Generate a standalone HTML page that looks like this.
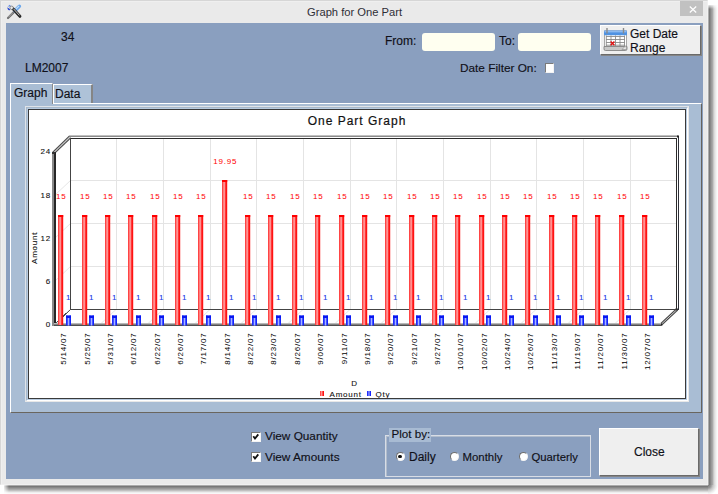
<!DOCTYPE html>
<html><head><meta charset="utf-8">
<style>
*{box-sizing:border-box}
html,body{margin:0;padding:0}
body{width:718px;height:494px;background:#fff;position:relative;overflow:hidden;font-family:"Liberation Sans",sans-serif;color:#1a1a1a}
.a{position:absolute}
.t{position:absolute;white-space:pre;font-size:12px;line-height:14px;color:#101018;-webkit-text-stroke:0.15px #101018}
#win{left:0;top:0;width:708px;height:485px;background:#eaeaea;border:1px solid #d6d6d6;border-right-color:#f0f0f0;border-bottom-color:#f0f0f0;box-shadow:inset 1px 1px 0 #efefef}
#client{left:6px;top:23px;width:697px;height:456px;background:#8a9fbf}
.inp{background:#fffff0;border-radius:3px}
.btn{background:#efefef;border:1px solid;border-color:#fff #6a6a6a #6a6a6a #fff;box-shadow:1px 1px 0 #858585}
.cb{background:#fff;border:1px solid;border-color:#7a7a7a #f4f4f4 #f4f4f4 #7a7a7a}
.rb{background:#fff;border-radius:50%;border:1.3px solid;border-color:#6e6e6e #f4f4f4 #f4f4f4 #6e6e6e}
</style></head>
<body>
<div class="a" style="left:708px;top:5px;width:10px;height:480px;background:linear-gradient(to right,#c6c6c6 0px,#7a7a7a 1.5px,#888 2.5px,#9a9a9a 3.5px,#a8a8a8 4.5px,#c6c6c6 5.5px,#dcdcdc 6.5px,#e9e9e9 7.5px,#f3f3f3 8.5px,#fafafa 9.5px)"></div>
<div class="a" style="left:708px;top:0px;width:10px;height:9px;background:linear-gradient(to bottom,#fff 4px,rgba(255,255,255,0) 9px)"></div>
<div class="a" style="left:4px;top:485px;width:704px;height:9px;background:linear-gradient(to bottom,#c4c4c4 0px,#777 1.5px,#888 2.5px,#999 3.5px,#aaa 4.5px,#c0c0c0 5.5px,#d8d8d8 6.5px,#eee 7.5px,#f8f8f8 8.5px)"></div>
<div class="a" style="left:0px;top:485px;width:9px;height:9px;background:linear-gradient(to right,#fff 3px,rgba(255,255,255,0) 9px)"></div>
<div class="a" style="left:708px;top:485px;width:10px;height:9px;background:radial-gradient(circle at 0 0,#7a7a7a 0px,#999 3px,#c6c6c6 5px,#eee 8px,#fff 10px)"></div>
<div id="win" class="a"></div>

<!-- title bar icon -->
<svg class="a" style="left:4px;top:2px" width="20" height="20" viewBox="0 0 20 20">
  <path d="M4 16 L9.6 10.4" stroke="#6e6e6e" stroke-width="2.2" stroke-linecap="round"/>
  <path d="M4.4 15.2 L9.2 10.4" stroke="#c4c4c4" stroke-width="0.7"/>
  <path d="M10.8 8.8 L15.4 4.3" stroke="#6aa6ea" stroke-width="3.4" stroke-linecap="round"/>
  <path d="M10.6 8.4 L15 4" stroke="#c4e0fa" stroke-width="1.2"/>
  <path d="M9 6.8 L15.9 14.3" stroke="#262626" stroke-width="3" stroke-linecap="round"/>
  <path d="M9.6 6.9 L15.5 13.4" stroke="#d8d8d8" stroke-width="0.9"/>
  <path d="M3.6 4.4 L5.8 2.8 L7.2 4.4 Z" fill="#5a86e8"/>
  <path d="M3.4 5.2 L6.2 7.6 L5.2 8.6 Q3.2 7.4 3.4 5.2Z" fill="#1638d0"/>
  <circle cx="7.6" cy="5.8" r="1.7" fill="#e8e8e8" stroke="#555" stroke-width="0.6"/>
</svg>
<div class="t" style="left:307px;top:4.5px;font-size:11.2px;color:#2e2e36;-webkit-text-stroke:0">Graph for One Part</div>
<div class="a" style="left:680px;top:1px;width:23px;height:15px;background:#c1c1c1"></div>
<svg class="a" style="left:688.5px;top:5.5px" width="8" height="7" viewBox="0 0 8 7"><path d="M0.8 0.5 L7.2 6.5 M7.2 0.5 L0.8 6.5" stroke="#fff" stroke-width="1.2"/></svg>

<div id="client" class="a"></div>

<div class="t" style="left:61px;top:30px">34</div>
<div class="t" style="left:25px;top:61px">LM2007</div>

<div class="t" style="left:385px;top:34px">From:</div>
<div class="a inp" style="left:422px;top:33px;width:73px;height:18px"></div>
<div class="t" style="left:499px;top:34px">To:</div>
<div class="a inp" style="left:518px;top:33px;width:73px;height:18px"></div>

<div class="a btn" style="left:600px;top:25px;width:101px;height:30px"></div>
<div class="t" style="left:630px;top:27px;line-height:14px">Get Date<br>Range</div>
<svg class="a" style="left:603px;top:27px" width="25" height="25" viewBox="0 0 25 25">
  <rect x="1.5" y="4" width="22" height="16" fill="#fff" stroke="#a8a8a8" stroke-width="1"/>
  <path d="M1 19.5 H24 V22 Q24 23.5 22.5 23.5 H2.5 Q1 23.5 1 22Z" fill="#c8c8c8" stroke="#7a7a7a" stroke-width="0.8"/>
  <rect x="1" y="3.6" width="23" height="4.6" rx="1" fill="#4f92e2"/>
  <rect x="1.5" y="3.8" width="22" height="1.6" fill="#8cbaf0"/>
  <path d="M3 9.5 H22 M3 12.5 H22 M3 15.5 H22 M3 18.2 H22" stroke="#8a8a8a" stroke-width="0.9"/>
  <path d="M3.3 8.5 V19 M8 8.5 V19 M12.5 8.5 V19 M17 8.5 V19 M21.5 8.5 V19" stroke="#8a8a8a" stroke-width="0.9"/>
  <path d="M4 1 V6.5 M20.5 1 V6.5" stroke="#8a8a8a" stroke-width="1.4"/>
  <path d="M7.6 14.6 L11.4 18.2 M11.4 14.6 L7.6 18.2" stroke="#e01010" stroke-width="1.4"/>
  <path d="M19 22.5 L23 18.5 L23.5 22.5Z" fill="#e8e8e8" stroke="#888" stroke-width="0.6"/>
</svg>

<div class="t" style="left:460px;top:61px;font-size:11.8px">Date Filter On:</div>
<div class="a cb" style="left:545px;top:63px;width:9px;height:10px"></div>

<!-- tabs -->
<div class="a" style="left:10px;top:103px;width:692px;height:310px;background:#a9bdd4;border-left:1px solid #fff;border-top:1px solid #fff;border-right:1px solid #66635e;border-bottom:1px solid #6a665f"></div>
<div class="a" style="left:53px;top:84px;width:40px;height:19px;background:#aec2d8;border-left:1px solid #fff;border-top:1px solid #fff;border-right:2px solid #858585"></div>
<div class="a" style="left:10px;top:83px;width:43px;height:21px;background:#a9bdd4;border-left:1px solid #fff;border-top:1px solid #fff;border-right:1px solid #8a8a8a"></div>
<div class="t" style="left:14px;top:86px">Graph</div>
<div class="t" style="left:55px;top:87px">Data</div>

<!-- chart frame -->
<div class="a" style="left:25px;top:106px;width:664px;height:296px;border:1px solid;border-color:#dfe3e8 #e8e8e8 #e8e8e8 #dfe3e8;background:#b8cbe0"></div>
<div class="a" style="left:26px;top:107px;width:662px;height:294px;border:1px solid;border-color:#a7b9cc #fff #fff #a7b9cc"></div>
<div class="a" style="left:28px;top:109px;width:658px;height:290px;background:#fff;border:1px solid #3a3a3a"></div>

<!-- bottom controls -->
<div class="a cb" style="left:251px;top:432px;width:10px;height:10px"></div>
<div class="a cb" style="left:251px;top:452px;width:10px;height:10px"></div>
<svg class="a" style="left:251px;top:432px" width="10" height="30" viewBox="0 0 10 30">
<path d="M2.3 4.3 L4 6.6 L7.3 2.4" stroke="#111" stroke-width="1.8" fill="none" stroke-linejoin="miter"/>
<path d="M2.3 24.3 L4 26.6 L7.3 22.4" stroke="#111" stroke-width="1.8" fill="none" stroke-linejoin="miter"/>
</svg>
<div class="t" style="left:265px;top:429px;font-size:11.8px">View Quantity</div>
<div class="t" style="left:265px;top:450px;font-size:11.8px">View Amounts</div>

<div class="a" style="left:385px;top:435px;width:206px;height:42px;border:1px solid #d8dde6;box-shadow:inset 1px 1px 0 #b0bccc"></div>
<div class="a" style="left:389px;top:428px;width:42px;height:14px;background:#a8bbd3"></div>
<div class="t" style="left:391.5px;top:427px;font-size:11.6px">Plot by:</div>
<div class="a rb" style="left:395.7px;top:451.8px;width:9px;height:9px"></div>
<div class="a rb" style="left:449.7px;top:451.8px;width:9px;height:9px"></div>
<div class="a rb" style="left:518.7px;top:452px;width:9px;height:9px"></div>
<div class="a" style="left:398.2px;top:454.5px;width:3.4px;height:3.4px;border-radius:50%;background:#111"></div>
<div class="t" style="left:409px;top:450px">Daily</div>
<div class="t" style="left:462.5px;top:450px;font-size:11.4px">Monthly</div>
<div class="t" style="left:531.5px;top:450px;font-size:11.3px">Quarterly</div>

<div class="a btn" style="left:599px;top:428px;width:100px;height:48px"></div>
<div class="t" style="left:634px;top:445px">Close</div>

<!-- CHART -->
<svg class="a" style="left:29px;top:110px" width="656" height="288" viewBox="29 110 656 288">
<defs><linearGradient id="rg" x1="0" x2="1" y1="0" y2="0"><stop offset="0" stop-color="#ff2020"/><stop offset="0.2" stop-color="#ff6a6a"/><stop offset="0.45" stop-color="#ffa0a0"/><stop offset="0.7" stop-color="#ff2a2a"/><stop offset="1" stop-color="#ff0000"/></linearGradient><linearGradient id="bg" x1="0" x2="1" y1="0" y2="0"><stop offset="0" stop-color="#1a22ff"/><stop offset="0.25" stop-color="#2a3aff"/><stop offset="0.5" stop-color="#a8b4ff"/><stop offset="0.75" stop-color="#2a3aff"/><stop offset="1" stop-color="#0010ff"/></linearGradient></defs>
<path d="M116.5 138V309M163.5 138V309M210.5 138V309M256.5 138V309M303.5 138V309M350.5 138V309M396.5 138V309M443.5 138V309M490.5 138V309M536.5 138V309M583.5 138V309M630.5 138V309M70 266.5H677M70 223.5H677M70 180.5H677" stroke="#e4e4e4" stroke-width="1" fill="none" shape-rendering="crispEdges"/>
<path d="M116.5 309L100.5 324M163.5 309L147.5 324M210.5 309L194.5 324M256.5 309L240.5 324M303.5 309L287.5 324M350.5 309L334.5 324M396.5 309L380.5 324M443.5 309L427.5 324M490.5 309L474.5 324M536.5 309L520.5 324M583.5 309L567.5 324M630.5 309L614.5 324M70.5 266.5L54.5 281.5M70.5 223.5L54.5 238.5M70.5 180.5L54.5 195.5" stroke="#e6e6e6" stroke-width="1" fill="none"/>
<path d="M70.5 138V309.5H677M70.5 309.5L54.5 324.5" stroke="#444" stroke-width="1" fill="none" shape-rendering="crispEdges"/>
<path d="M70.5 309.5L54.5 324.5" stroke="#555" stroke-width="1" fill="none"/>
<rect x="69" y="135" width="609" height="1" fill="#c0c0c0"/>
<rect x="69" y="136" width="609" height="1" fill="#8a8a8a"/>
<path d="M70 138.5H676.5V309" stroke="#2a2a2a" stroke-width="1" fill="none" shape-rendering="crispEdges"/>
<path d="M678.5 136V310" stroke="#2e3038" stroke-width="1" fill="none" shape-rendering="crispEdges"/>
<rect x="677" y="135.5" width="2" height="2" fill="#222"/>
<path d="M70 137L53.5 152.8" stroke="#4a4a4a" stroke-width="3.2" fill="none"/>
<path d="M70 137L53.5 152.8" stroke="#c8c8c8" stroke-width="1.1" fill="none"/>
<rect x="52" y="153" width="2" height="173" fill="#8a8a8a"/>
<rect x="54" y="152" width="2" height="173" fill="#262626"/>
<rect x="52" y="152" width="3" height="2" fill="#333"/>
<path d="M661 324.5L677 309.5" stroke="#4a4a4a" stroke-width="3" fill="none"/>
<path d="M661 324.5L677 309.5" stroke="#c8c8c8" stroke-width="1" fill="none"/>
<rect x="660" y="323.5" width="2.2" height="2.2" fill="#222"/>
<rect x="675.5" y="308.5" width="2.5" height="2" fill="#333"/>
<rect x="54" y="323" width="607" height="1" fill="#b8b8b8"/>
<rect x="54" y="324" width="607" height="1" fill="#828282"/>
<rect x="54" y="325" width="607" height="1" fill="#4e4e4e"/>
<rect x="58" y="215" width="5.2" height="110" fill="url(#rg)"/>
<rect x="58" y="215" width="5.2" height="2" fill="#ff0000"/>
<rect x="66" y="315.5" width="5" height="10" fill="url(#bg)"/>
<rect x="66" y="315.5" width="5" height="2.5" fill="#0818f0"/>
<rect x="82" y="215" width="5.2" height="110" fill="url(#rg)"/>
<rect x="82" y="215" width="5.2" height="2" fill="#ff0000"/>
<rect x="89" y="315.5" width="5" height="10" fill="url(#bg)"/>
<rect x="89" y="315.5" width="5" height="2.5" fill="#0818f0"/>
<rect x="105" y="215" width="5.2" height="110" fill="url(#rg)"/>
<rect x="105" y="215" width="5.2" height="2" fill="#ff0000"/>
<rect x="112" y="315.5" width="5" height="10" fill="url(#bg)"/>
<rect x="112" y="315.5" width="5" height="2.5" fill="#0818f0"/>
<rect x="128" y="215" width="5.2" height="110" fill="url(#rg)"/>
<rect x="128" y="215" width="5.2" height="2" fill="#ff0000"/>
<rect x="136" y="315.5" width="5" height="10" fill="url(#bg)"/>
<rect x="136" y="315.5" width="5" height="2.5" fill="#0818f0"/>
<rect x="152" y="215" width="5.2" height="110" fill="url(#rg)"/>
<rect x="152" y="215" width="5.2" height="2" fill="#ff0000"/>
<rect x="159" y="315.5" width="5" height="10" fill="url(#bg)"/>
<rect x="159" y="315.5" width="5" height="2.5" fill="#0818f0"/>
<rect x="175" y="215" width="5.2" height="110" fill="url(#rg)"/>
<rect x="175" y="215" width="5.2" height="2" fill="#ff0000"/>
<rect x="182" y="315.5" width="5" height="10" fill="url(#bg)"/>
<rect x="182" y="315.5" width="5" height="2.5" fill="#0818f0"/>
<rect x="198" y="215" width="5.2" height="110" fill="url(#rg)"/>
<rect x="198" y="215" width="5.2" height="2" fill="#ff0000"/>
<rect x="206" y="315.5" width="5" height="10" fill="url(#bg)"/>
<rect x="206" y="315.5" width="5" height="2.5" fill="#0818f0"/>
<rect x="222" y="180" width="5.2" height="145" fill="url(#rg)"/>
<rect x="222" y="180" width="5.2" height="2" fill="#ff0000"/>
<rect x="229" y="315.5" width="5" height="10" fill="url(#bg)"/>
<rect x="229" y="315.5" width="5" height="2.5" fill="#0818f0"/>
<rect x="245" y="215" width="5.2" height="110" fill="url(#rg)"/>
<rect x="245" y="215" width="5.2" height="2" fill="#ff0000"/>
<rect x="252" y="315.5" width="5" height="10" fill="url(#bg)"/>
<rect x="252" y="315.5" width="5" height="2.5" fill="#0818f0"/>
<rect x="268" y="215" width="5.2" height="110" fill="url(#rg)"/>
<rect x="268" y="215" width="5.2" height="2" fill="#ff0000"/>
<rect x="276" y="315.5" width="5" height="10" fill="url(#bg)"/>
<rect x="276" y="315.5" width="5" height="2.5" fill="#0818f0"/>
<rect x="292" y="215" width="5.2" height="110" fill="url(#rg)"/>
<rect x="292" y="215" width="5.2" height="2" fill="#ff0000"/>
<rect x="299" y="315.5" width="5" height="10" fill="url(#bg)"/>
<rect x="299" y="315.5" width="5" height="2.5" fill="#0818f0"/>
<rect x="315" y="215" width="5.2" height="110" fill="url(#rg)"/>
<rect x="315" y="215" width="5.2" height="2" fill="#ff0000"/>
<rect x="323" y="315.5" width="5" height="10" fill="url(#bg)"/>
<rect x="323" y="315.5" width="5" height="2.5" fill="#0818f0"/>
<rect x="339" y="215" width="5.2" height="110" fill="url(#rg)"/>
<rect x="339" y="215" width="5.2" height="2" fill="#ff0000"/>
<rect x="346" y="315.5" width="5" height="10" fill="url(#bg)"/>
<rect x="346" y="315.5" width="5" height="2.5" fill="#0818f0"/>
<rect x="362" y="215" width="5.2" height="110" fill="url(#rg)"/>
<rect x="362" y="215" width="5.2" height="2" fill="#ff0000"/>
<rect x="369" y="315.5" width="5" height="10" fill="url(#bg)"/>
<rect x="369" y="315.5" width="5" height="2.5" fill="#0818f0"/>
<rect x="385" y="215" width="5.2" height="110" fill="url(#rg)"/>
<rect x="385" y="215" width="5.2" height="2" fill="#ff0000"/>
<rect x="393" y="315.5" width="5" height="10" fill="url(#bg)"/>
<rect x="393" y="315.5" width="5" height="2.5" fill="#0818f0"/>
<rect x="409" y="215" width="5.2" height="110" fill="url(#rg)"/>
<rect x="409" y="215" width="5.2" height="2" fill="#ff0000"/>
<rect x="416" y="315.5" width="5" height="10" fill="url(#bg)"/>
<rect x="416" y="315.5" width="5" height="2.5" fill="#0818f0"/>
<rect x="432" y="215" width="5.2" height="110" fill="url(#rg)"/>
<rect x="432" y="215" width="5.2" height="2" fill="#ff0000"/>
<rect x="439" y="315.5" width="5" height="10" fill="url(#bg)"/>
<rect x="439" y="315.5" width="5" height="2.5" fill="#0818f0"/>
<rect x="455" y="215" width="5.2" height="110" fill="url(#rg)"/>
<rect x="455" y="215" width="5.2" height="2" fill="#ff0000"/>
<rect x="463" y="315.5" width="5" height="10" fill="url(#bg)"/>
<rect x="463" y="315.5" width="5" height="2.5" fill="#0818f0"/>
<rect x="479" y="215" width="5.2" height="110" fill="url(#rg)"/>
<rect x="479" y="215" width="5.2" height="2" fill="#ff0000"/>
<rect x="486" y="315.5" width="5" height="10" fill="url(#bg)"/>
<rect x="486" y="315.5" width="5" height="2.5" fill="#0818f0"/>
<rect x="502" y="215" width="5.2" height="110" fill="url(#rg)"/>
<rect x="502" y="215" width="5.2" height="2" fill="#ff0000"/>
<rect x="509" y="315.5" width="5" height="10" fill="url(#bg)"/>
<rect x="509" y="315.5" width="5" height="2.5" fill="#0818f0"/>
<rect x="525" y="215" width="5.2" height="110" fill="url(#rg)"/>
<rect x="525" y="215" width="5.2" height="2" fill="#ff0000"/>
<rect x="533" y="315.5" width="5" height="10" fill="url(#bg)"/>
<rect x="533" y="315.5" width="5" height="2.5" fill="#0818f0"/>
<rect x="549" y="215" width="5.2" height="110" fill="url(#rg)"/>
<rect x="549" y="215" width="5.2" height="2" fill="#ff0000"/>
<rect x="556" y="315.5" width="5" height="10" fill="url(#bg)"/>
<rect x="556" y="315.5" width="5" height="2.5" fill="#0818f0"/>
<rect x="572" y="215" width="5.2" height="110" fill="url(#rg)"/>
<rect x="572" y="215" width="5.2" height="2" fill="#ff0000"/>
<rect x="579" y="315.5" width="5" height="10" fill="url(#bg)"/>
<rect x="579" y="315.5" width="5" height="2.5" fill="#0818f0"/>
<rect x="595" y="215" width="5.2" height="110" fill="url(#rg)"/>
<rect x="595" y="215" width="5.2" height="2" fill="#ff0000"/>
<rect x="603" y="315.5" width="5" height="10" fill="url(#bg)"/>
<rect x="603" y="315.5" width="5" height="2.5" fill="#0818f0"/>
<rect x="619" y="215" width="5.2" height="110" fill="url(#rg)"/>
<rect x="619" y="215" width="5.2" height="2" fill="#ff0000"/>
<rect x="626" y="315.5" width="5" height="10" fill="url(#bg)"/>
<rect x="626" y="315.5" width="5" height="2.5" fill="#0818f0"/>
<rect x="642" y="215" width="5.2" height="110" fill="url(#rg)"/>
<rect x="642" y="215" width="5.2" height="2" fill="#ff0000"/>
<rect x="649" y="315.5" width="5" height="10" fill="url(#bg)"/>
<rect x="649" y="315.5" width="5" height="2.5" fill="#0818f0"/>
<style>.ct{font-family:"Liberation Sans",sans-serif;font-size:8px;letter-spacing:0.8px;stroke-width:0.1px}</style>
<text x="61.199999999999996" y="199" fill="#ff0000" text-anchor="middle" class="ct">15</text><text x="68.6" y="300" fill="#1838e8" stroke="#1838e8" text-anchor="middle" class="ct">1</text><text transform="translate(66.2,332.5) rotate(-90)" fill="#000" text-anchor="end" class="ct">5/14/07</text><text x="85.2" y="199" fill="#ff0000" text-anchor="middle" class="ct">15</text><text x="91.6" y="300" fill="#1838e8" stroke="#1838e8" text-anchor="middle" class="ct">1</text><text transform="translate(90.2,332.5) rotate(-90)" fill="#000" text-anchor="end" class="ct">5/25/07</text><text x="108.2" y="199" fill="#ff0000" text-anchor="middle" class="ct">15</text><text x="114.6" y="300" fill="#1838e8" stroke="#1838e8" text-anchor="middle" class="ct">1</text><text transform="translate(113.2,332.5) rotate(-90)" fill="#000" text-anchor="end" class="ct">5/31/07</text><text x="131.20000000000002" y="199" fill="#ff0000" text-anchor="middle" class="ct">15</text><text x="138.6" y="300" fill="#1838e8" stroke="#1838e8" text-anchor="middle" class="ct">1</text><text transform="translate(136.2,332.5) rotate(-90)" fill="#000" text-anchor="end" class="ct">6/12/07</text><text x="155.20000000000002" y="199" fill="#ff0000" text-anchor="middle" class="ct">15</text><text x="161.6" y="300" fill="#1838e8" stroke="#1838e8" text-anchor="middle" class="ct">1</text><text transform="translate(160.2,332.5) rotate(-90)" fill="#000" text-anchor="end" class="ct">6/22/07</text><text x="178.20000000000002" y="199" fill="#ff0000" text-anchor="middle" class="ct">15</text><text x="184.6" y="300" fill="#1838e8" stroke="#1838e8" text-anchor="middle" class="ct">1</text><text transform="translate(183.2,332.5) rotate(-90)" fill="#000" text-anchor="end" class="ct">6/26/07</text><text x="201.20000000000002" y="199" fill="#ff0000" text-anchor="middle" class="ct">15</text><text x="208.6" y="300" fill="#1838e8" stroke="#1838e8" text-anchor="middle" class="ct">1</text><text transform="translate(206.2,332.5) rotate(-90)" fill="#000" text-anchor="end" class="ct">7/17/07</text><text x="225.20000000000002" y="164" fill="#ff0000" text-anchor="middle" class="ct">19.95</text><text x="231.6" y="300" fill="#1838e8" stroke="#1838e8" text-anchor="middle" class="ct">1</text><text transform="translate(230.2,332.5) rotate(-90)" fill="#000" text-anchor="end" class="ct">8/14/07</text><text x="248.20000000000002" y="199" fill="#ff0000" text-anchor="middle" class="ct">15</text><text x="254.6" y="300" fill="#1838e8" stroke="#1838e8" text-anchor="middle" class="ct">1</text><text transform="translate(253.2,332.5) rotate(-90)" fill="#000" text-anchor="end" class="ct">8/22/07</text><text x="271.2" y="199" fill="#ff0000" text-anchor="middle" class="ct">15</text><text x="278.6" y="300" fill="#1838e8" stroke="#1838e8" text-anchor="middle" class="ct">1</text><text transform="translate(276.2,332.5) rotate(-90)" fill="#000" text-anchor="end" class="ct">8/23/07</text><text x="295.2" y="199" fill="#ff0000" text-anchor="middle" class="ct">15</text><text x="301.6" y="300" fill="#1838e8" stroke="#1838e8" text-anchor="middle" class="ct">1</text><text transform="translate(300.2,332.5) rotate(-90)" fill="#000" text-anchor="end" class="ct">8/26/07</text><text x="318.2" y="199" fill="#ff0000" text-anchor="middle" class="ct">15</text><text x="325.6" y="300" fill="#1838e8" stroke="#1838e8" text-anchor="middle" class="ct">1</text><text transform="translate(323.2,332.5) rotate(-90)" fill="#000" text-anchor="end" class="ct">9/06/07</text><text x="342.2" y="199" fill="#ff0000" text-anchor="middle" class="ct">15</text><text x="348.6" y="300" fill="#1838e8" stroke="#1838e8" text-anchor="middle" class="ct">1</text><text transform="translate(347.2,332.5) rotate(-90)" fill="#000" text-anchor="end" class="ct">9/11/07</text><text x="365.2" y="199" fill="#ff0000" text-anchor="middle" class="ct">15</text><text x="371.6" y="300" fill="#1838e8" stroke="#1838e8" text-anchor="middle" class="ct">1</text><text transform="translate(370.2,332.5) rotate(-90)" fill="#000" text-anchor="end" class="ct">9/18/07</text><text x="388.2" y="199" fill="#ff0000" text-anchor="middle" class="ct">15</text><text x="395.6" y="300" fill="#1838e8" stroke="#1838e8" text-anchor="middle" class="ct">1</text><text transform="translate(393.2,332.5) rotate(-90)" fill="#000" text-anchor="end" class="ct">9/20/07</text><text x="412.2" y="199" fill="#ff0000" text-anchor="middle" class="ct">15</text><text x="418.6" y="300" fill="#1838e8" stroke="#1838e8" text-anchor="middle" class="ct">1</text><text transform="translate(417.2,332.5) rotate(-90)" fill="#000" text-anchor="end" class="ct">9/21/07</text><text x="435.2" y="199" fill="#ff0000" text-anchor="middle" class="ct">15</text><text x="441.6" y="300" fill="#1838e8" stroke="#1838e8" text-anchor="middle" class="ct">1</text><text transform="translate(440.2,332.5) rotate(-90)" fill="#000" text-anchor="end" class="ct">9/27/07</text><text x="458.2" y="199" fill="#ff0000" text-anchor="middle" class="ct">15</text><text x="465.6" y="300" fill="#1838e8" stroke="#1838e8" text-anchor="middle" class="ct">1</text><text transform="translate(463.2,332.5) rotate(-90)" fill="#000" text-anchor="end" class="ct">10/01/07</text><text x="482.2" y="199" fill="#ff0000" text-anchor="middle" class="ct">15</text><text x="488.6" y="300" fill="#1838e8" stroke="#1838e8" text-anchor="middle" class="ct">1</text><text transform="translate(487.2,332.5) rotate(-90)" fill="#000" text-anchor="end" class="ct">10/02/07</text><text x="505.2" y="199" fill="#ff0000" text-anchor="middle" class="ct">15</text><text x="511.6" y="300" fill="#1838e8" stroke="#1838e8" text-anchor="middle" class="ct">1</text><text transform="translate(510.2,332.5) rotate(-90)" fill="#000" text-anchor="end" class="ct">10/24/07</text><text x="528.1999999999999" y="199" fill="#ff0000" text-anchor="middle" class="ct">15</text><text x="535.6" y="300" fill="#1838e8" stroke="#1838e8" text-anchor="middle" class="ct">1</text><text transform="translate(533.2,332.5) rotate(-90)" fill="#000" text-anchor="end" class="ct">10/26/07</text><text x="552.1999999999999" y="199" fill="#ff0000" text-anchor="middle" class="ct">15</text><text x="558.6" y="300" fill="#1838e8" stroke="#1838e8" text-anchor="middle" class="ct">1</text><text transform="translate(557.2,332.5) rotate(-90)" fill="#000" text-anchor="end" class="ct">11/13/07</text><text x="575.1999999999999" y="199" fill="#ff0000" text-anchor="middle" class="ct">15</text><text x="581.6" y="300" fill="#1838e8" stroke="#1838e8" text-anchor="middle" class="ct">1</text><text transform="translate(580.2,332.5) rotate(-90)" fill="#000" text-anchor="end" class="ct">11/19/07</text><text x="598.1999999999999" y="199" fill="#ff0000" text-anchor="middle" class="ct">15</text><text x="605.6" y="300" fill="#1838e8" stroke="#1838e8" text-anchor="middle" class="ct">1</text><text transform="translate(603.2,332.5) rotate(-90)" fill="#000" text-anchor="end" class="ct">11/20/07</text><text x="622.1999999999999" y="199" fill="#ff0000" text-anchor="middle" class="ct">15</text><text x="628.6" y="300" fill="#1838e8" stroke="#1838e8" text-anchor="middle" class="ct">1</text><text transform="translate(627.2,332.5) rotate(-90)" fill="#000" text-anchor="end" class="ct">11/30/07</text><text x="645.1999999999999" y="199" fill="#ff0000" text-anchor="middle" class="ct">15</text><text x="651.6" y="300" fill="#1838e8" stroke="#1838e8" text-anchor="middle" class="ct">1</text><text transform="translate(650.2,332.5) rotate(-90)" fill="#000" text-anchor="end" class="ct">12/07/07</text>
<text x="51" y="327.0" fill="#111" stroke="#111" text-anchor="end" class="ct">0</text>
<text x="51" y="283.86" fill="#111" stroke="#111" text-anchor="end" class="ct">6</text>
<text x="51" y="240.72" fill="#111" stroke="#111" text-anchor="end" class="ct">12</text>
<text x="51" y="197.57999999999998" fill="#111" stroke="#111" text-anchor="end" class="ct">18</text>
<text x="51" y="154.44" fill="#111" stroke="#111" text-anchor="end" class="ct">24</text>
<text transform="translate(37,264) rotate(-90)" fill="#111" stroke="#111" class="ct">Amount</text>
<text x="354.5" y="386" fill="#111" stroke="#111" text-anchor="middle" class="ct">D</text>
<rect x="320" y="391" width="4" height="5" fill="url(#rg)"/>
<text x="329.5" y="397" fill="#111" stroke="#111" class="ct">Amount</text>
<rect x="367" y="391" width="4" height="5" fill="url(#bg)"/>
<text x="375.5" y="397" fill="#111" stroke="#111" class="ct">Qty</text>
<text x="357" y="124.5" fill="#111" stroke="#111" stroke-width="0.2" text-anchor="middle" style="font-family:'Liberation Sans',sans-serif;font-size:12px;letter-spacing:1.0px">One Part Graph</text>
</svg>
<!-- /CHART -->
</body></html>
